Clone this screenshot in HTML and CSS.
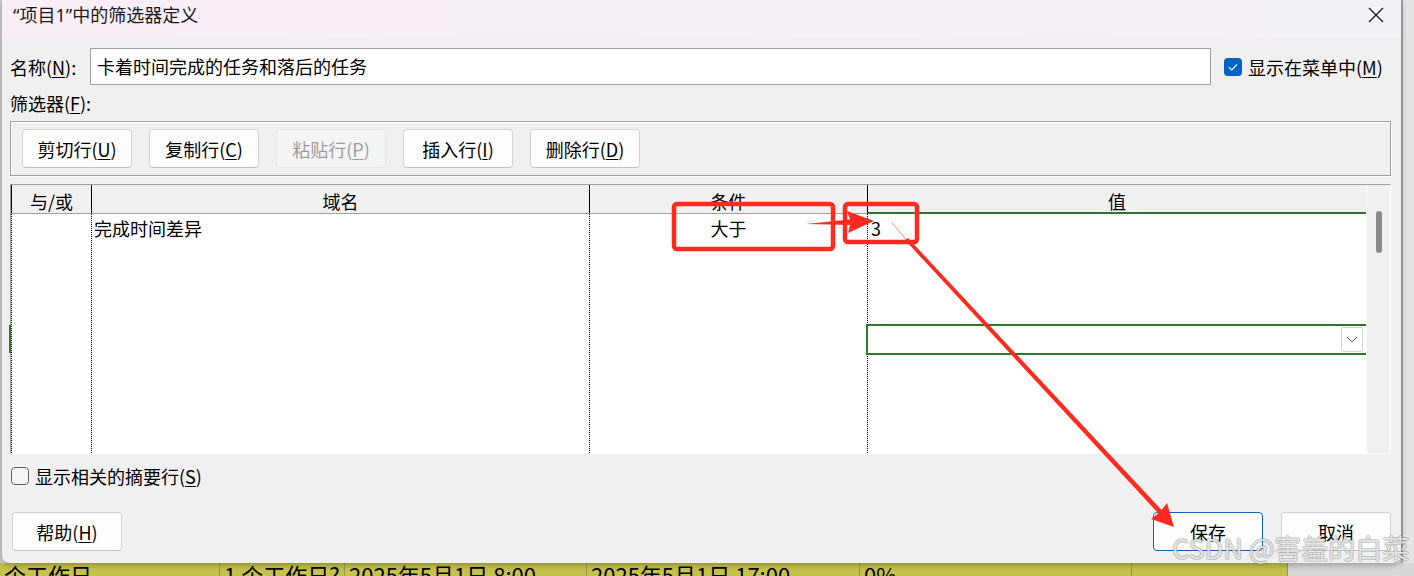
FILE: index.html
```html
<!DOCTYPE html>
<html lang="zh-CN">
<head>
  <meta charset="UTF-8">
  <title>筛选器定义</title>
  <link rel="stylesheet" href="styles.css">
</head>
<body>
  <div class="screen">
    <div class="left-edge"></div>
    <div class="dialog">
      <div class="titlebar">
        <span class="title">“项目1”中的筛选器定义</span>
        <svg class="close" width="16" height="16" viewBox="0 0 16 16">
          <path d="M1 1 L15 15 M15 1 L1 15" stroke="#1a1a1a" stroke-width="1.3" fill="none"/>
        </svg>
      </div>

      <div class="content">
        <div class="name-row">
          <span class="label">名称(<u>N</u>):</span>
          <div class="text-input">卡着时间完成的任务和落后的任务</div>
          <div class="check menu-check">
            <span class="box checked">
              <svg width="18" height="18" viewBox="0 0 18 18">
                <path d="M5 9.3 L7.8 12 L13 6.3" stroke="#fff" stroke-width="1.2" fill="none"/>
              </svg>
            </span>
            <span>显示在菜单中(<u>M</u>)</span>
          </div>
        </div>

        <div class="filter-label">筛选器(<u>F</u>):</div>

        <div class="toolbar">
          <button class="btn">剪切行(<u>U</u>)</button>
          <button class="btn">复制行(<u>C</u>)</button>
          <button class="btn" disabled>粘贴行(<u>P</u>)</button>
          <button class="btn">插入行(<u>I</u>)</button>
          <button class="btn">删除行(<u>D</u>)</button>
        </div>

        <div class="grid">
          <div class="cols">
            <div class="grid-head">
              <div>与/或</div>
              <div>域名</div>
              <div>条件</div>
              <div class="active">值</div>
            </div>
            <div class="grid-body">
              <div class="col">
                <div class="row"></div>
                <div class="gap"></div>
                <div class="row-mark"></div>
              </div>
              <div class="col">
                <div class="row field">完成时间差异</div>
              </div>
              <div class="col">
                <div class="row cond">大于</div>
              </div>
              <div class="col">
                <div class="row value">3</div>
                <div class="gap value-gap"></div>
                <div class="editor">
                  <span class="drop">
                    <svg width="12" height="7" viewBox="0 0 12 7">
                      <path d="M1 1 L6 6 L11 1" stroke="#555" stroke-width="1" fill="none"/>
                    </svg>
                  </span>
                </div>
              </div>
            </div>
          </div>
          <div class="scroll"><div class="thumb"></div></div>
        </div>

        <div class="check summary-check">
          <span class="box"></span>
          <span>显示相关的摘要行(<u>S</u>)</span>
        </div>

        <div class="footer">
          <button class="btn help">帮助(<u>H</u>)</button>
          <span class="spacer"></span>
          <button class="btn default">保存</button>
          <button class="btn">取消</button>
        </div>
      </div>
    </div>
    <div class="right-edge"></div>
  </div>

  <div class="sheet">
    <div class="cell c1">个工作日</div>
    <div class="cell c2">1 个工作日?</div>
    <div class="cell c3">2025年5月1日 8:00</div>
    <div class="cell c4">2025年5月1日 17:00</div>
    <div class="cell c5">0%</div>
    <div class="cell c6"></div>
    <div class="cell rest"></div>
  </div>

  <svg class="annot" width="1414" height="576" viewBox="0 0 1414 576">
    <rect x="674" y="204" width="159" height="45" rx="3" fill="none" stroke="#ff2a1f" stroke-width="4.5"/>
    <rect x="845" y="204" width="72" height="38" rx="3" fill="none" stroke="#ff2a1f" stroke-width="4.5"/>
    <polygon points="806,224 850,219.5 847,211 874,221 848,233 850,225" fill="#ff2a1f"/>
    <line x1="892" y1="223" x2="922" y2="258" stroke="#ff8a80" stroke-width="1"/>
    <polygon points="905,240 1158.5,513.5 1162,510.5 908,238" fill="#ff2a1f"/>
    <polygon points="1151,519 1174,527 1167,503 1160,512" fill="#ff2a1f"/>
  </svg>

  <div class="watermark">CSDN @害羞的白菜</div>
</body>
</html>
```

FILE: styles.css
```css
body {
  margin: 0;
  width: 1414px;
  height: 576px;
  overflow: hidden;
  position: relative;
  background: #dcdcdc;
  font-family: "Noto Sans CJK SC", "Noto Sans", sans-serif;
  font-size: 18px;
  color: #000;
}
u {
  text-underline-offset: 2px;
}

.screen {
  display: flex;
  height: 563px;
}
.left-edge {
  width: 2px;
  background: #cfcfcf;
}
.right-edge {
  flex: 1;
  background: #e4e4e4;
  border-left: 2px solid #a8a8a8;
}
.dialog {
  width: 1399px;
  flex-shrink: 0;
  display: flex;
  flex-direction: column;
  background: #f0f0f0;
  border-radius: 0 0 8px 8px;
  box-shadow: 0 2px 6px rgba(0, 0, 0, 0.3);
  position: relative;
  z-index: 1;
}

.titlebar {
  height: 37px;
  display: flex;
  align-items: flex-start;
  padding-left: 11px;
  background: linear-gradient(to right, #f9eef8, #f4f1f7);
}
.title {
  font-family: "Noto Sans", "Noto Sans CJK SC", sans-serif;
  line-height: 30px;
  color: #1a1a1a;
}
.close {
  margin: 7px 17px 0 auto;
}

.content {
  flex: 1;
  display: flex;
  flex-direction: column;
  padding: 11px 10px 12px 8px;
}

.name-row {
  display: flex;
  align-items: center;
  height: 37px;
}
.name-row .label {
  width: 80px;
  flex-shrink: 0;
}
.text-input {
  width: 1121px;
  flex-shrink: 0;
  height: 37px;
  box-sizing: border-box;
  border: 1px solid #a0a0a0;
  background: #fff;
  padding-left: 6px;
  line-height: 34px;
}
.check {
  display: flex;
  align-items: center;
  gap: 6px;
  white-space: nowrap;
}
.menu-check {
  margin-left: 13px;
}
.box {
  width: 18px;
  height: 18px;
  flex-shrink: 0;
  box-sizing: border-box;
  border: 1px solid #616161;
  border-radius: 4px;
  background: #f6f6f6;
}
.box.checked {
  border: none;
  background: #0063c3;
}
.box svg {
  display: block;
}

.filter-label {
  margin-top: 6px;
  height: 24px;
  line-height: 24px;
}

.toolbar {
  margin-top: 6px;
  height: 55px;
  box-sizing: border-box;
  border: 1px solid #a0a0a0;
  box-shadow: inset 1px 1px 0 #fff, 1px 1px 0 #fff;
  display: flex;
  align-items: center;
  gap: 17px;
  padding-left: 11px;
}
.btn {
  width: 110px;
  height: 39px;
  box-sizing: border-box;
  padding: 0;
  border: 1px solid #d2d2d2;
  border-bottom-color: #c2c2c2;
  border-radius: 4px;
  background: #fdfdfd;
  font-family: inherit;
  font-size: 18px;
  line-height: 36px;
  color: #000;
}
.btn:disabled {
  background: #f5f5f5;
  border-color: #e6e6e6;
  color: #9d9d9d;
}
.btn.default {
  border: 1px solid #0a66c2;
}

.grid {
  margin-top: 8px;
  height: 270px;
  box-sizing: border-box;
  border: 1px solid;
  border-color: #a0a0a0 #fff #fff #a0a0a0;
  display: flex;
  background: #fff;
}
.cols {
  flex: 1;
  display: flex;
  flex-direction: column;
}
.grid-head,
.grid-body {
  display: grid;
  grid-template-columns: 80px 498px 278px 499px;
}
.grid-head {
  height: 28px;
  background: #f0f0f0;
  border-bottom: 1px solid #a0a0a0;
}
.grid-head div {
  border-left: 1px solid #000;
  text-align: center;
  padding-top: 3px;
  line-height: 26px;
  height: 28px;
  box-sizing: border-box;
}
.grid-head .active {
  box-shadow: inset 0 -1px 0 #317532, 0 1px 0 #317532;
}
.grid-body {
  flex: 1;
}
.col {
  border-left: 1px dotted #000;
}
.row {
  height: 28px;
  line-height: 28px;
}
.field {
  padding-left: 2px;
}
.cond {
  text-align: center;
}
.value {
  padding-left: 3px;
}
.gap {
  height: 83px;
}
.value-gap {
  height: 82px;
}
.row-mark {
  margin-left: -3px;
  width: 2px;
  height: 28px;
  background: #317532;
}
.editor {
  margin-left: -2px;
  height: 31px;
  box-sizing: border-box;
  border: 2px solid #317532;
  border-right: none;
  background: #fff;
  display: flex;
  align-items: center;
  justify-content: flex-end;
  padding-right: 3px;
}
.drop {
  width: 22px;
  height: 25px;
  box-sizing: border-box;
  border: 1px solid #d4d4d4;
  border-radius: 2px;
  background: #fff;
  display: flex;
  align-items: center;
  justify-content: center;
}
.scroll {
  width: 24px;
  box-sizing: border-box;
  background: #f0f0f0;
  border-left: 1px solid #fafafa;
}
.thumb {
  margin: 26px 0 0 9px;
  width: 6px;
  height: 42px;
  border-radius: 3px;
  background: #8b8b8b;
}

.summary-check {
  margin-top: 12px;
  height: 20px;
  margin-left: 1px;
}

.footer {
  margin-top: 26px;
  display: flex;
  gap: 18px;
}
.help {
  margin-left: 2px;
}
.spacer {
  flex: 1;
}

.sheet {
  height: 13px;
  display: flex;
  overflow: hidden;
  background: #c6c24c;
  font-size: 22px;
  line-height: 26px;
}
.cell {
  height: 26px;
  margin-top: -2px;
  padding-left: 4px;
  box-sizing: border-box;
  border-right: 1px solid #9a9850;
  white-space: nowrap;
  overflow: hidden;
}
.c1 { width: 220px; }
.c2 { width: 125px; }
.c3 { width: 242px; }
.c4 { width: 273px; }
.c5 { width: 272px; }
.c6 { width: 156px; }
.rest {
  flex: 1;
  background: #d8d8d8;
  border: none;
}

.annot {
  position: absolute;
  left: 0;
  top: 0;
  z-index: 2;
  pointer-events: none;
}
.watermark {
  position: absolute;
  left: 1172px;
  top: 532px;
  z-index: 3;
  font-size: 27px;
  line-height: 32px;
  white-space: nowrap;
  color: rgba(255, 255, 255, 0.75);
  text-shadow: 1px 0 0 rgba(90, 90, 90, 0.3), -1px 0 0 rgba(90, 90, 90, 0.3),
    0 1px 0 rgba(90, 90, 90, 0.3), 0 -1px 0 rgba(90, 90, 90, 0.3);
}
```
